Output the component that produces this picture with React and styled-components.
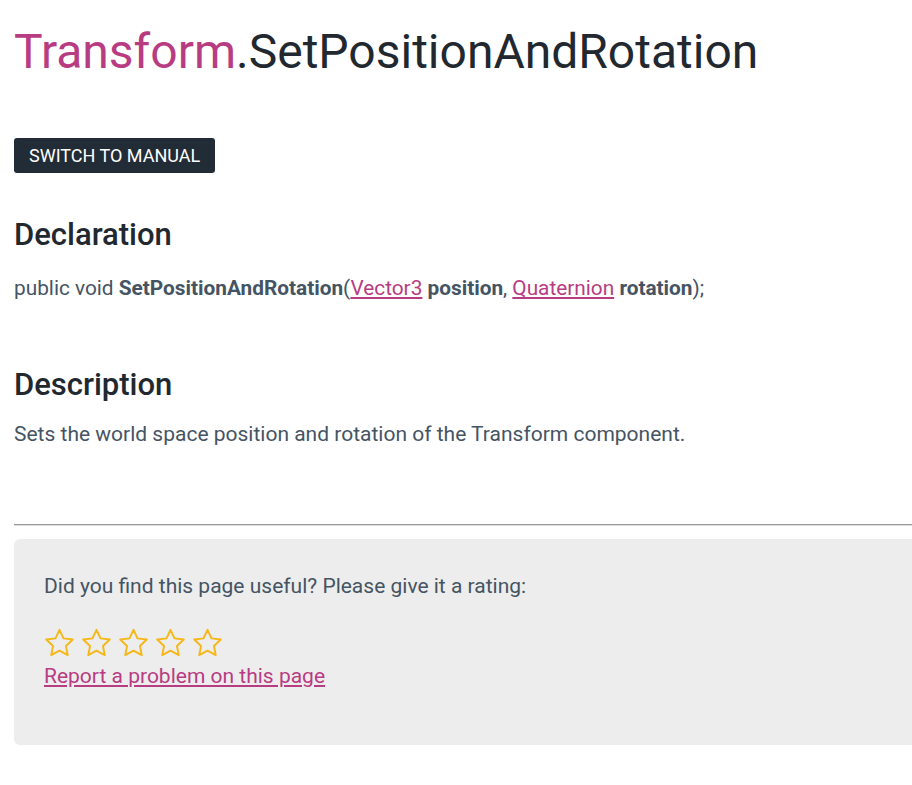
import React from 'react';
import styled, { createGlobalStyle } from 'styled-components';

const GlobalStyle = createGlobalStyle`
  html, body {
    margin: 0;
    padding: 0;
    overflow: hidden;
    background: #fff;
  }
  body {
    font-family: Roboto, "Liberation Sans", sans-serif;
    color: #455463;
  }
`;

const Page = styled.div`
  width: 960px;
  padding: 22px 0 40px 14px;
`;

const Title = styled.h1`
  margin: 0;
  font-size: 48px;
  font-weight: 400;
  line-height: 60px;
  color: #22282f;
`;

const Accent = styled.span`
  color: #b83c82;
`;

const ManualButton = styled.button`
  display: block;
  margin-top: 56px;
  height: 35px;
  padding: 0 15px;
  background: #222c37;
  color: #fff;
  border: none;
  border-radius: 3px;
  font-family: Roboto, "Liberation Sans", sans-serif;
  font-size: 18px;
  text-transform: uppercase;
  cursor: pointer;
`;

const Heading = styled.h2`
  margin: ${(p) => p.$top || 0}px 0 0;
  font-size: 31px;
  font-weight: 500;
  line-height: 40px;
  color: #22282f;
`;

const Text = styled.p`
  margin: ${(p) => p.$top || 0}px 0 0;
  font-size: 21px;
  line-height: 28px;
  color: #455463;
`;

const Code = styled(Text)`
  font-size: 20.8px;

  b {
    font-weight: 700;
  }
`;

const TypeLink = styled.a`
  color: #b83c82;
  text-decoration: underline;
  cursor: pointer;
`;

const Rule = styled.hr`
  margin: 76px 0 0;
  border: none;
  border-top: 1px solid #999;
  border-bottom: 1px solid #ddd;
`;

const Feedback = styled.div`
  margin-top: 13px;
  background: #ededed;
  border-radius: 6px;
  padding: 33px 30px 56px;
  height: 206px;
  box-sizing: border-box;
`;

const Stars = styled.div`
  display: flex;
  gap: 6px;
  margin-top: 27px;
  height: 32px;
  align-items: center;
`;

const ReportLink = styled.a`
  display: inline-block;
  margin-top: 3px;
  font-size: 21px;
  line-height: 28px;
  color: #b83c82;
  text-decoration: underline;
  cursor: pointer;
`;

function Star() {
  return (
    <svg width="31" height="30" viewBox="0 0 24 23" fill="none">
      <path
        d="M12 1.3l3.1 6.6 7.2.9-5.3 5 1.4 7.1L12 17.4l-6.4 3.5 1.4-7.1-5.3-5 7.2-.9z"
        stroke="#f6b819"
        strokeWidth="1.5"
        strokeLinejoin="round"
      />
    </svg>
  );
}

export default function App() {
  return (
    <>
      <GlobalStyle />
      <Page>
        <Title>
          <Accent>Transform</Accent>.SetPositionAndRotation
        </Title>
        <ManualButton>Switch to Manual</ManualButton>
        <Heading $top={42}>Declaration</Heading>
        <Code $top={19}>
          public void <b>SetPositionAndRotation</b>(<TypeLink>Vector3</TypeLink> <b>position</b>,{' '}
          <TypeLink>Quaternion</TypeLink> <b>rotation</b>);
        </Code>
        <Heading $top={63}>Description</Heading>
        <Text $top={15}>Sets the world space position and rotation of the Transform component.</Text>
        <Rule />
        <Feedback>
          <Text>Did you find this page useful? Please give it a rating:</Text>
          <Stars>
            {[0, 1, 2, 3, 4].map((i) => (
              <Star key={i} />
            ))}
          </Stars>
          <ReportLink>Report a problem on this page</ReportLink>
        </Feedback>
      </Page>
    </>
  );
}
